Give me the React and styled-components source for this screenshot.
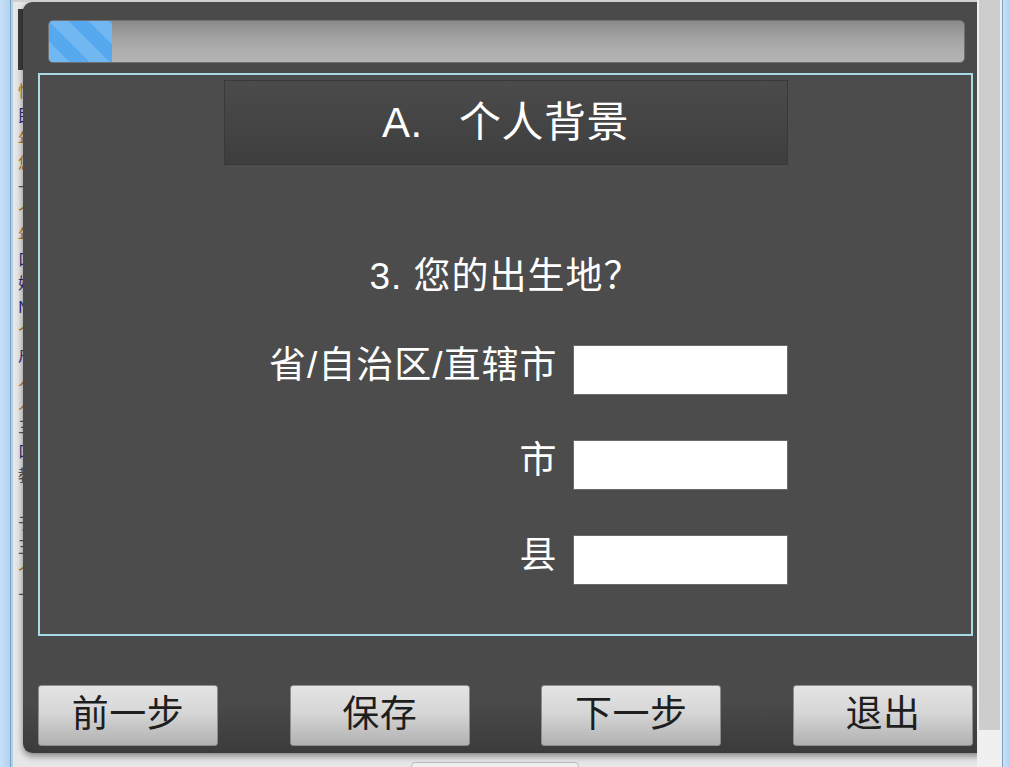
import React from "react";
import styled, { createGlobalStyle } from "styled-components";

const Global = createGlobalStyle`
  html, body { margin: 0; padding: 0; width: 1010px; height: 767px; overflow: hidden; }
  body { font-family: "Liberation Sans", "Noto Sans CJK SC", sans-serif; background: #e8e8e8; }
  #root { width: 1010px; height: 767px; }
`;

const Screen = styled.div`
  display: flex;
  width: 1010px;
  height: 767px;
  overflow: hidden;
`;

const FrameEdge = styled.div`
  flex: none;
  width: ${(p) => p.$w}px;
  box-sizing: border-box;
  background: linear-gradient(90deg, #c8e1f8, #b2d2f2);
  ${(p) => (p.$side === "left" ? "border-right: 1px solid #7f9ebe;" : "border-left: 1px solid #7f9ebe;")}
`;

const PageArea = styled.div`
  position: relative;
  flex: 1;
  overflow: hidden;
  background: #e7e7e7;
  border-left: 2px solid #a9d6e6;
  border-top: 2px solid #d0d0d0;
`;

const Sheet = styled.div`
  display: flex;
  flex-direction: column;
  height: 100%;
  padding-left: 5px;
  box-sizing: border-box;
`;

const DarkBlock = styled.div`
  width: 80px;
  height: 61px;
  margin-top: 7px;
  background: #3c3c3c;
`;

const Lines = styled.div`
  display: flex;
  flex-direction: column;
  margin-top: 8px;
`;

const Line = styled.div`
  font-family: "Noto Sans CJK SC", sans-serif;
  font-size: 16px;
  line-height: 24px;
  color: ${(p) => p.$color};
  white-space: nowrap;
`;

const PageFooter = styled.div`
  margin-top: auto;
  margin-left: -5px;
  height: 5px;
  overflow: hidden;
  display: flex;
  justify-content: center;
`;

const GhostButton = styled.div`
  flex: none;
  width: 168px;
  height: 24px;
  box-sizing: border-box;
  border: 1px solid #bdbdbd;
  border-radius: 4px;
  background: #efefef;
`;

const Scrollbar = styled.div`
  flex: none;
  width: 25px;
  box-sizing: border-box;
  padding: 0 2px 0 2px;
  background: #f0f0f0;
`;

const Thumb = styled.div`
  height: 730px;
  background: #cdcdcd;
`;

const Dialog = styled.div`
  position: absolute;
  left: 10px;
  top: 0;
  width: 965px;
  height: 751px;
  box-sizing: border-box;
  padding: 18px 15px 7px;
  display: flex;
  flex-direction: column;
  border-radius: 9px;
  background: linear-gradient(180deg, #4a4a4a 0%, #4a4a4a 93%, #3b3b3b 100%);
  box-shadow: 0 3px 7px rgba(0, 0, 0, 0.45);
`;

const Progress = styled.div`
  height: 43px;
  margin: 0 8px 0 10px;
  box-sizing: border-box;
  border: 1px solid #707070;
  border-radius: 5px;
  overflow: hidden;
  background: linear-gradient(180deg, #8b8b8b 0%, #a9a9a9 55%, #b4b4b4 100%);
`;

const ProgressFill = styled.div`
  height: 100%;
  background-color: #56a9ee;
  background-image: linear-gradient(
    45deg,
    rgba(255, 255, 255, 0.16) 25%,
    transparent 25%,
    transparent 50%,
    rgba(255, 255, 255, 0.16) 50%,
    rgba(255, 255, 255, 0.16) 75%,
    transparent 75%,
    transparent
  );
  background-size: 40px 40px;
`;

const ContentBox = styled.div`
  margin-top: 10px;
  height: 563px;
  box-sizing: border-box;
  border: 2px solid #a9dbe7;
  background: #4c4c4c;
  display: flex;
  flex-direction: column;
  align-items: center;
  padding-top: 5px;
`;

const SectionHeader = styled.div`
  width: 564px;
  height: 85px;
  box-sizing: border-box;
  padding-bottom: 9px;
  border: 1px solid #393939;
  background: linear-gradient(180deg, #4b4b4b, #3e3e3e);
  display: flex;
  align-items: center;
  justify-content: center;
  color: #ffffff;
  font-size: 42px;
  letter-spacing: 0.5px;
  white-space: pre;
`;

const Question = styled.div`
  margin-top: 90px;
  font-size: 37px;
  line-height: 44px;
  letter-spacing: 1px;
  color: #ffffff;
`;

const Form = styled.div`
  margin-top: 46px;
  width: 564px;
  display: grid;
  grid-template-columns: 1fr 215px;
  column-gap: 15px;
  row-gap: 45px;
`;

const FieldLabel = styled.label`
  text-align: right;
  font-size: 37px;
  line-height: 42px;
  letter-spacing: 1px;
  color: #ffffff;
  white-space: nowrap;
`;

const FieldInput = styled.input`
  height: 50px;
  box-sizing: border-box;
  border: 1px solid #6a6a6a;
  background: #ffffff;
  outline: none;
  padding: 0 6px;
  font-size: 20px;
`;

const ButtonBar = styled.div`
  margin-top: auto;
  display: flex;
  justify-content: space-between;
`;

const NavButton = styled.button`
  width: 180px;
  height: 61px;
  box-sizing: border-box;
  border: 1px solid #8c8c8c;
  border-radius: 3px;
  background: linear-gradient(180deg, #e4e4e4 0%, #d6d6d6 45%, #b1b1b1 100%);
  color: #1e1e1e;
  font-family: "Noto Sans CJK SC", sans-serif;
  font-size: 37px;
  letter-spacing: 0.5px;
  padding: 0 0 9px;
  line-height: 1;
  cursor: pointer;
`;

const pageLines = [
  ["#b87428", "性别"],
  ["#2e2e7a", "民族"],
  ["#b87428", "年龄"],
  ["#b87428", "您的出生"],
  ["#555555", "一"],
  ["#b87428", "个人"],
  ["#b87428", "年"],
  ["#2e2e7a", "口"],
  ["#2e2e7a", "婚姻"],
  ["#2e2e7a", "N"],
  ["#b87428", "个"],
  ["#2e2e7a", "户口"],
  ["#b87428", "入"],
  ["#b87428", "人"],
  ["#555555", "三"],
  ["#2e2e7a", "口"],
  ["#555555", "教育"],
  ["#b87428", ""],
  ["#555555", "于"],
  ["#555555", "王"],
  ["#b87428", "个"],
  ["#555555", "十"],
];

const fields = [
  { id: "province", label: "省/自治区/直辖市" },
  { id: "city", label: "市" },
  { id: "county", label: "县" },
];

const buttons = ["前一步", "保存", "下一步", "退出"];

export default function App() {
  const progress = 63 / 917;
  return (
    <Screen>
      <Global />
      <FrameEdge $w={11} $side="left" />
      <PageArea>
        <Sheet>
          <DarkBlock />
          <Lines>
            {pageLines.map(([c, t], i) => (
              <Line key={i} $color={c}>
                {t || "\u00a0"}
              </Line>
            ))}
          </Lines>
          <PageFooter>
            <GhostButton />
          </PageFooter>
        </Sheet>
        <Dialog>
          <Progress>
            <ProgressFill style={{ width: `${progress * 100}%` }} />
          </Progress>
          <ContentBox>
            <SectionHeader>{"A.   个人背景"}</SectionHeader>
            <Question>3. 您的出生地？</Question>
            <Form>
              {fields.map((f) => (
                <React.Fragment key={f.id}>
                  <FieldLabel htmlFor={f.id}>{f.label}</FieldLabel>
                  <FieldInput id={f.id} type="text" />
                </React.Fragment>
              ))}
            </Form>
          </ContentBox>
          <ButtonBar>
            {buttons.map((b) => (
              <NavButton key={b}>{b}</NavButton>
            ))}
          </ButtonBar>
        </Dialog>
      </PageArea>
      <Scrollbar>
        <Thumb />
      </Scrollbar>
      <FrameEdge $w={8} $side="right" />
    </Screen>
  );
}
